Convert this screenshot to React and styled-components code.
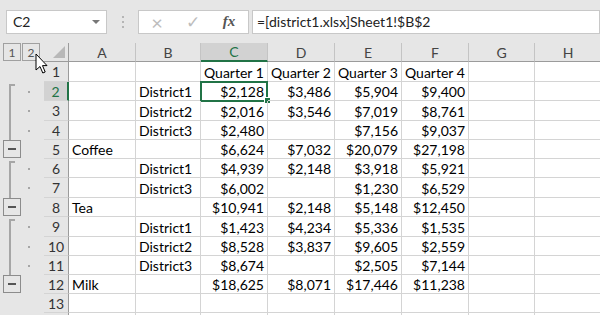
import React from "react";
import styled, { createGlobalStyle } from "styled-components";

const GREEN = "#217346";

const GlobalStyle = createGlobalStyle`
  body {
    margin: 0;
    background: #fff;
  }
`;

const columns = [
  { key: "A", width: 67 },
  { key: "B", width: 65 },
  { key: "C", width: 67 },
  { key: "D", width: 67 },
  { key: "E", width: 67 },
  { key: "F", width: 67 },
  { key: "G", width: 66 },
  { key: "H", width: 67 },
];

// outline: start / mid / minus
const rows = [
  { n: 1, h: 20, cells: { C: "Quarter 1", D: "Quarter 2", E: "Quarter 3", F: "Quarter 4" } },
  { n: 2, h: 19, outline: "start", cells: { B: "District1", C: "$2,128", D: "$3,486", E: "$5,904", F: "$9,400" } },
  { n: 3, h: 20, outline: "mid", cells: { B: "District2", C: "$2,016", D: "$3,546", E: "$7,019", F: "$8,761" } },
  { n: 4, h: 19, outline: "mid", cells: { B: "District3", C: "$2,480", E: "$7,156", F: "$9,037" } },
  { n: 5, h: 19, outline: "minus", cells: { A: "Coffee", C: "$6,624", D: "$7,032", E: "$20,079", F: "$27,198" } },
  { n: 6, h: 19, outline: "start", cells: { B: "District1", C: "$4,939", D: "$2,148", E: "$3,918", F: "$5,921" } },
  { n: 7, h: 20, outline: "mid", cells: { B: "District3", C: "$6,002", E: "$1,230", F: "$6,529" } },
  { n: 8, h: 19, outline: "minus", cells: { A: "Tea", C: "$10,941", D: "$2,148", E: "$5,148", F: "$12,450" } },
  { n: 9, h: 20, outline: "start", cells: { B: "District1", C: "$1,423", D: "$4,234", E: "$5,336", F: "$1,535" } },
  { n: 10, h: 19, outline: "mid", cells: { B: "District2", C: "$8,528", D: "$3,837", E: "$9,605", F: "$2,559" } },
  { n: 11, h: 19, outline: "mid", cells: { B: "District3", C: "$8,674", E: "$2,505", F: "$7,144" } },
  { n: 12, h: 19, outline: "minus", cells: { A: "Milk", C: "$18,625", D: "$8,071", E: "$17,446", F: "$11,238" } },
  { n: 13, h: 19, cells: {} },
  { n: null, h: 19, cells: {} },
];

const Screen = styled.div`
  position: relative;
  width: 600px;
  height: 315px;
  overflow: hidden;
  background: #fff;
  font-family: Lato, "Liberation Sans", sans-serif;
  font-size: 14px;
  color: #000;
`;

const TopBar = styled.div`
  height: 43px;
  background: #e6e6e6;
  display: flex;
  align-items: center;
  padding-left: 6px;
  box-sizing: border-box;
`;

const Field = styled.div`
  height: 24px;
  background: #fff;
  border: 1px solid #c8c8c8;
  box-sizing: border-box;
  display: flex;
  align-items: center;
  width: ${(p) => p.$w}px;
  flex: ${(p) => (p.$grow ? 1 : "none")};
  margin-right: ${(p) => p.$mr || 0}px;
`;

const NameText = styled.span`
  padding-left: 6px;
  flex: 1;
  color: #222;
`;

const DropArrow = styled.span`
  width: 0;
  height: 0;
  border-left: 4px solid transparent;
  border-right: 4px solid transparent;
  border-top: 4px solid #777;
  margin-right: 6px;
`;

const Grip = styled.div`
  width: 2px;
  margin: 0 14px 0 15px;
  display: flex;
  flex-direction: column;
  gap: 3px;
  span {
    width: 2px;
    height: 2px;
    background: #b5b5b5;
  }
`;

const FxButton = styled.span`
  width: 36px;
  text-align: center;
  color: ${(p) => (p.$dim ? "#bdbdbd" : "#555")};
  font-size: ${(p) => p.$size || 16}px;
  font-family: ${(p) => (p.$serif ? '"Liberation Serif", serif' : "inherit")};
  font-style: ${(p) => (p.$serif ? "italic" : "normal")};
  font-weight: ${(p) => (p.$serif ? "bold" : "normal")};
`;

const FormulaText = styled.span`
  padding-left: 4px;
  color: #222;
  white-space: nowrap;
`;

const Row = styled.div`
  display: flex;
  height: ${(p) => p.$h}px;
`;

const OutlineCell = styled.div`
  width: 44px;
  flex: none;
  background: #e6e6e6;
  display: flex;
  align-items: stretch;
`;

const LevelButtons = styled.div`
  width: 44px;
  flex: none;
  background: #e6e6e6;
  display: flex;
  gap: 1px;
  padding: 0 0 1px 3px;
  box-sizing: border-box;
`;

const LevelButton = styled.div`
  width: 18px;
  height: 18px;
  border: 1px solid #a0a0a0;
  box-sizing: border-box;
  font-size: 12px;
  color: #555;
  display: flex;
  align-items: center;
  justify-content: center;
`;

const Bracket = styled.div`
  width: 6px;
  margin-left: 9px;
  border-left: 2px solid #a6a6a6;
  border-top: ${(p) => (p.$start ? "2px solid #a6a6a6" : "none")};
  margin-top: ${(p) => (p.$start ? 2 : 0)}px;
  box-sizing: border-box;
`;

const Dot = styled.div`
  width: 2px;
  height: 2px;
  background: #a6a6a6;
  align-self: center;
  margin-left: 13px;
`;

const MinusBox = styled.div`
  width: 18px;
  height: 18px;
  margin-left: 3px;
  border: 1px solid #8c8c8c;
  box-sizing: border-box;
  display: flex;
  align-items: center;
  justify-content: center;
  &::before {
    content: "";
    width: 8px;
    height: 2px;
    background: #555;
  }
`;

const Corner = styled.div`
  width: 25px;
  flex: none;
  background: #e6e6e6;
  border-right: 1px solid #9b9b9b;
  border-bottom: 1px solid #9b9b9b;
  box-sizing: border-box;
  display: flex;
  align-items: flex-end;
  justify-content: flex-end;
  padding: 0 3px 3px 0;
  &::before {
    content: "";
    width: 0;
    height: 0;
    border-left: 12px solid transparent;
    border-bottom: 12px solid #b8b8b8;
  }
`;

const ColHeader = styled.div`
  width: ${(p) => p.$w}px;
  flex: none;
  box-sizing: border-box;
  background: ${(p) => (p.$sel ? "#d2d2d2" : "#e6e6e6")};
  color: ${(p) => (p.$sel ? GREEN : "#444")};
  border-right: 1px solid #c4c4c4;
  border-bottom: ${(p) => (p.$sel ? `2px solid ${GREEN}` : "1px solid #9b9b9b")};
  display: flex;
  align-items: center;
  justify-content: center;
`;

const RowHeader = styled.div`
  width: 25px;
  flex: none;
  box-sizing: border-box;
  background: ${(p) => (p.$sel ? "#d2d2d2" : "#e6e6e6")};
  color: ${(p) => (p.$sel ? GREEN : "#333")};
  border-right: ${(p) => (p.$sel ? `2px solid ${GREEN}` : "1px solid #9b9b9b")};
  border-bottom: 1px solid #d4d4d4;
  display: flex;
  align-items: center;
  justify-content: center;
`;

const Cell = styled.div`
  position: relative;
  width: ${(p) => p.$w}px;
  flex: none;
  box-sizing: border-box;
  border-right: 1px solid #d4d4d4;
  border-bottom: 1px solid #d4d4d4;
  display: flex;
  align-items: flex-end;
  justify-content: ${(p) => (p.$num ? "flex-end" : "flex-start")};
  padding: 0 3px;
  line-height: 16px;
  white-space: nowrap;

  ${(p) =>
    p.$active &&
    `
    &::before {
      content: "";
      position: absolute;
      left: -1px;
      top: -1px;
      right: -1px;
      bottom: -2px;
      border: 2px solid ${GREEN};
    }
    &::after {
      content: "";
      position: absolute;
      right: -4px;
      bottom: -4px;
      width: 5px;
      height: 5px;
      background: ${GREEN};
      border: 1px solid #fff;
    }
  `}
`;

const Pointer = styled.svg`
  position: absolute;
  left: 35px;
  top: 53px;
`;

const Outline = ({ kind }) => {
  if (kind === "minus") return <MinusBox />;
  if (kind === "start" || kind === "mid")
    return (
      <>
        <Bracket $start={kind === "start"} />
        <Dot />
      </>
    );
  return null;
};

const App = () => {
  return (
    <Screen>
      <GlobalStyle />
      <TopBar>
        <Field $w={101}>
          <NameText>C2</NameText>
          <DropArrow />
        </Field>
        <Grip>
          <span />
          <span />
          <span />
        </Grip>
        <Field $w={111} $mr={3}>
          <FxButton $dim $size={20}>×</FxButton>
          <FxButton $dim $size={17}>✓</FxButton>
          <FxButton $serif $size={15}>fx</FxButton>
        </Field>
        <Field $grow>
          <FormulaText>=[district1.xlsx]Sheet1!$B$2</FormulaText>
        </Field>
      </TopBar>

      <Row $h={19}>
        <LevelButtons>
          <LevelButton>1</LevelButton>
          <LevelButton>2</LevelButton>
        </LevelButtons>
        <Corner />
        {columns.map((c) => (
          <ColHeader key={c.key} $w={c.width} $sel={c.key === "C"}>
            {c.key}
          </ColHeader>
        ))}
      </Row>

      {rows.map((r, i) => (
        <Row key={i} $h={r.h}>
          <OutlineCell>
            <Outline kind={r.outline} />
          </OutlineCell>
          <RowHeader $sel={r.n === 2}>{r.n}</RowHeader>
          {columns.map((c) => {
            const v = r.cells[c.key];
            return (
              <Cell
                key={c.key}
                $w={c.width}
                $num={v && v.startsWith("$")}
                $active={r.n === 2 && c.key === "C"}
              >
                {v}
              </Cell>
            );
          })}
        </Row>
      ))}

      <Pointer width="14" height="22" viewBox="0 0 14 22">
        <path
          d="M1 1 L1 17 L5 13.5 L7.8 20 L10.2 19 L7.5 12.6 L12 12.6 Z"
          fill="#fff"
          stroke="#000"
          strokeWidth="1"
          strokeLinejoin="miter"
        />
      </Pointer>
    </Screen>
  );
};

export default App;
